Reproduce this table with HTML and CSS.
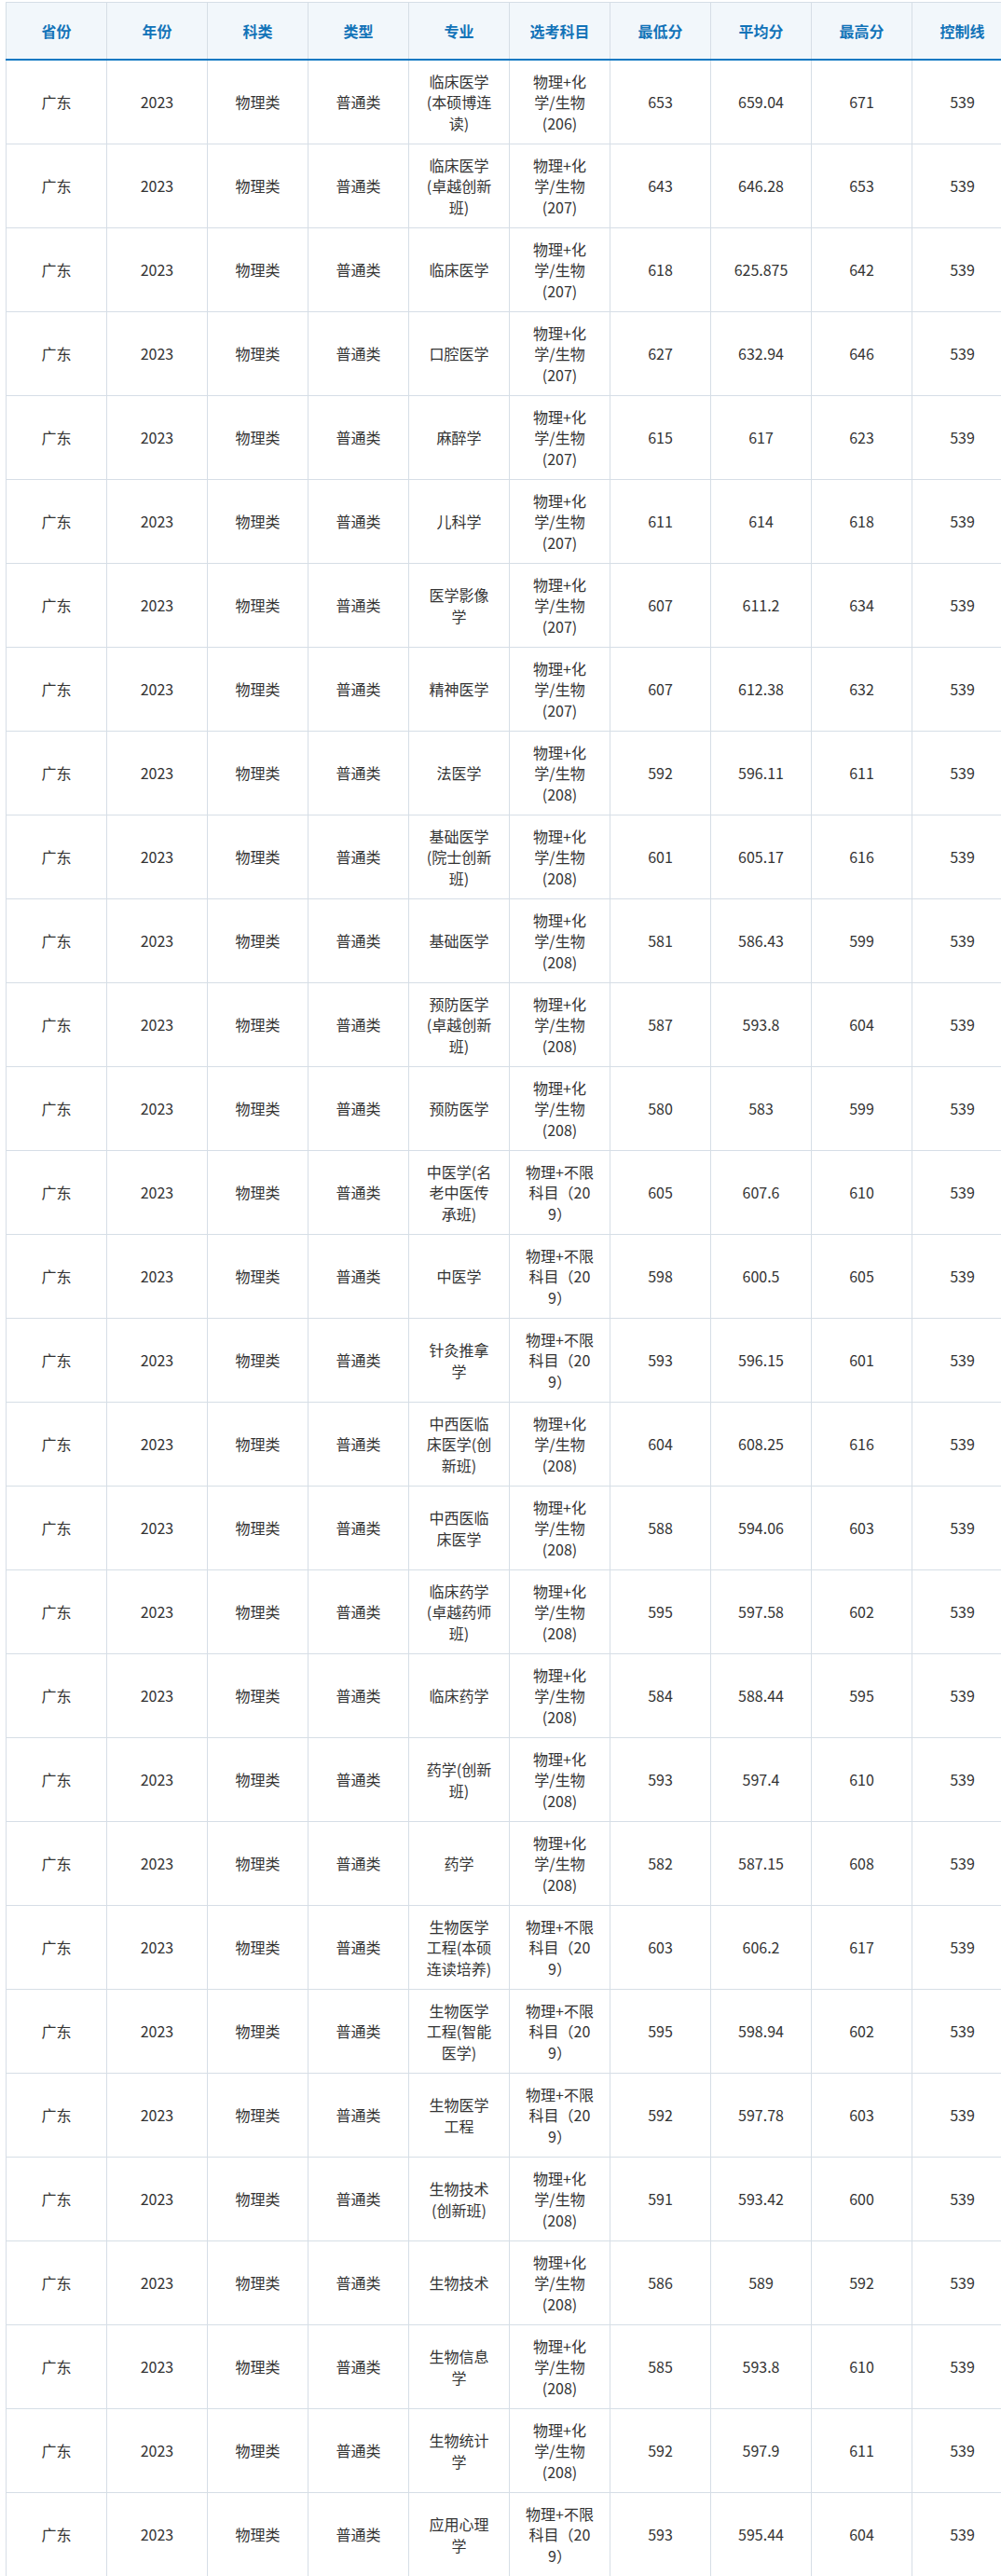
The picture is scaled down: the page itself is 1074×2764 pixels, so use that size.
FILE: index.html
```html
<!DOCTYPE html>
<html lang="zh-CN">
<head>
<meta charset="utf-8">
<title>录取分数</title>
<link rel="stylesheet" href="styles.css">
</head>
<body>
<table class="score-table">
<colgroup>
<col class="c"><col class="c"><col class="c"><col class="c"><col class="c"><col class="c"><col class="c"><col class="c"><col class="c"><col class="c">
</colgroup>
<thead>
<tr><th>省份</th><th>年份</th><th>科类</th><th>类型</th><th>专业</th><th>选考科目</th><th>最低分</th><th>平均分</th><th>最高分</th><th>控制线</th></tr>
</thead>
<tbody>
<tr><td>广东</td><td>2023</td><td>物理类</td><td>普通类</td><td>临床医学(本硕博连读)</td><td>物理+化学/生物(206)</td><td>653</td><td>659.04</td><td>671</td><td>539</td></tr>
<tr><td>广东</td><td>2023</td><td>物理类</td><td>普通类</td><td>临床医学(卓越创新班)</td><td>物理+化学/生物(207)</td><td>643</td><td>646.28</td><td>653</td><td>539</td></tr>
<tr><td>广东</td><td>2023</td><td>物理类</td><td>普通类</td><td>临床医学</td><td>物理+化学/生物(207)</td><td>618</td><td>625.875</td><td>642</td><td>539</td></tr>
<tr><td>广东</td><td>2023</td><td>物理类</td><td>普通类</td><td>口腔医学</td><td>物理+化学/生物(207)</td><td>627</td><td>632.94</td><td>646</td><td>539</td></tr>
<tr><td>广东</td><td>2023</td><td>物理类</td><td>普通类</td><td>麻醉学</td><td>物理+化学/生物(207)</td><td>615</td><td>617</td><td>623</td><td>539</td></tr>
<tr><td>广东</td><td>2023</td><td>物理类</td><td>普通类</td><td>儿科学</td><td>物理+化学/生物(207)</td><td>611</td><td>614</td><td>618</td><td>539</td></tr>
<tr><td>广东</td><td>2023</td><td>物理类</td><td>普通类</td><td>医学影像学</td><td>物理+化学/生物(207)</td><td>607</td><td>611.2</td><td>634</td><td>539</td></tr>
<tr><td>广东</td><td>2023</td><td>物理类</td><td>普通类</td><td>精神医学</td><td>物理+化学/生物(207)</td><td>607</td><td>612.38</td><td>632</td><td>539</td></tr>
<tr><td>广东</td><td>2023</td><td>物理类</td><td>普通类</td><td>法医学</td><td>物理+化学/生物(208)</td><td>592</td><td>596.11</td><td>611</td><td>539</td></tr>
<tr><td>广东</td><td>2023</td><td>物理类</td><td>普通类</td><td>基础医学(院士创新班)</td><td>物理+化学/生物(208)</td><td>601</td><td>605.17</td><td>616</td><td>539</td></tr>
<tr><td>广东</td><td>2023</td><td>物理类</td><td>普通类</td><td>基础医学</td><td>物理+化学/生物(208)</td><td>581</td><td>586.43</td><td>599</td><td>539</td></tr>
<tr><td>广东</td><td>2023</td><td>物理类</td><td>普通类</td><td>预防医学(卓越创新班)</td><td>物理+化学/生物(208)</td><td>587</td><td>593.8</td><td>604</td><td>539</td></tr>
<tr><td>广东</td><td>2023</td><td>物理类</td><td>普通类</td><td>预防医学</td><td>物理+化学/生物(208)</td><td>580</td><td>583</td><td>599</td><td>539</td></tr>
<tr><td>广东</td><td>2023</td><td>物理类</td><td>普通类</td><td>中医学(名老中医传承班)</td><td>物理+不限科目（20<wbr>9）</td><td>605</td><td>607.6</td><td>610</td><td>539</td></tr>
<tr><td>广东</td><td>2023</td><td>物理类</td><td>普通类</td><td>中医学</td><td>物理+不限科目（20<wbr>9）</td><td>598</td><td>600.5</td><td>605</td><td>539</td></tr>
<tr><td>广东</td><td>2023</td><td>物理类</td><td>普通类</td><td>针灸推拿学</td><td>物理+不限科目（20<wbr>9）</td><td>593</td><td>596.15</td><td>601</td><td>539</td></tr>
<tr><td>广东</td><td>2023</td><td>物理类</td><td>普通类</td><td>中西医临床医学(创新班)</td><td>物理+化学/生物(208)</td><td>604</td><td>608.25</td><td>616</td><td>539</td></tr>
<tr><td>广东</td><td>2023</td><td>物理类</td><td>普通类</td><td>中西医临床医学</td><td>物理+化学/生物(208)</td><td>588</td><td>594.06</td><td>603</td><td>539</td></tr>
<tr><td>广东</td><td>2023</td><td>物理类</td><td>普通类</td><td>临床药学(卓越药师班)</td><td>物理+化学/生物(208)</td><td>595</td><td>597.58</td><td>602</td><td>539</td></tr>
<tr><td>广东</td><td>2023</td><td>物理类</td><td>普通类</td><td>临床药学</td><td>物理+化学/生物(208)</td><td>584</td><td>588.44</td><td>595</td><td>539</td></tr>
<tr><td>广东</td><td>2023</td><td>物理类</td><td>普通类</td><td>药学(创新班)</td><td>物理+化学/生物(208)</td><td>593</td><td>597.4</td><td>610</td><td>539</td></tr>
<tr><td>广东</td><td>2023</td><td>物理类</td><td>普通类</td><td>药学</td><td>物理+化学/生物(208)</td><td>582</td><td>587.15</td><td>608</td><td>539</td></tr>
<tr><td>广东</td><td>2023</td><td>物理类</td><td>普通类</td><td>生物医学工程(本硕连读培养)</td><td>物理+不限科目（20<wbr>9）</td><td>603</td><td>606.2</td><td>617</td><td>539</td></tr>
<tr><td>广东</td><td>2023</td><td>物理类</td><td>普通类</td><td>生物医学工程(智能医学)</td><td>物理+不限科目（20<wbr>9）</td><td>595</td><td>598.94</td><td>602</td><td>539</td></tr>
<tr><td>广东</td><td>2023</td><td>物理类</td><td>普通类</td><td>生物医学工程</td><td>物理+不限科目（20<wbr>9）</td><td>592</td><td>597.78</td><td>603</td><td>539</td></tr>
<tr><td>广东</td><td>2023</td><td>物理类</td><td>普通类</td><td>生物技术(创新班)</td><td>物理+化学/生物(208)</td><td>591</td><td>593.42</td><td>600</td><td>539</td></tr>
<tr><td>广东</td><td>2023</td><td>物理类</td><td>普通类</td><td>生物技术</td><td>物理+化学/生物(208)</td><td>586</td><td>589</td><td>592</td><td>539</td></tr>
<tr><td>广东</td><td>2023</td><td>物理类</td><td>普通类</td><td>生物信息学</td><td>物理+化学/生物(208)</td><td>585</td><td>593.8</td><td>610</td><td>539</td></tr>
<tr><td>广东</td><td>2023</td><td>物理类</td><td>普通类</td><td>生物统计学</td><td>物理+化学/生物(208)</td><td>592</td><td>597.9</td><td>611</td><td>539</td></tr>
<tr><td>广东</td><td>2023</td><td>物理类</td><td>普通类</td><td>应用心理学</td><td>物理+不限科目（20<wbr>9）</td><td>593</td><td>595.44</td><td>604</td><td>539</td></tr>
</tbody>
</table>
</body>
</html>
```

FILE: styles.css
```css
html, body {
  margin: 0;
  padding: 0;
  background: #ffffff;
}

body {
  padding: 2px 0 0 6px;
  font-family: "Noto Sans CJK SC", "Noto Sans", sans-serif;
  font-size: 16px;
  color: #333333;
}

.score-table {
  width: 1080px;
  table-layout: fixed;
  border-collapse: collapse;
}

.score-table col.c {
  width: 108px;
}

.score-table th,
.score-table td {
  border: 1px solid #d6dee6;
  text-align: center;
  vertical-align: middle;
  word-break: normal;
  line-height: 22.4px;
  padding: 0 15px;
}

.score-table th {
  height: 60px;
  background: #f2f7fb;
  color: #1273b8;
  font-weight: bold;
  border-bottom: 2px solid #0e78c2;
}

.score-table td {
  height: 89px;
  font-weight: normal;
}
```
